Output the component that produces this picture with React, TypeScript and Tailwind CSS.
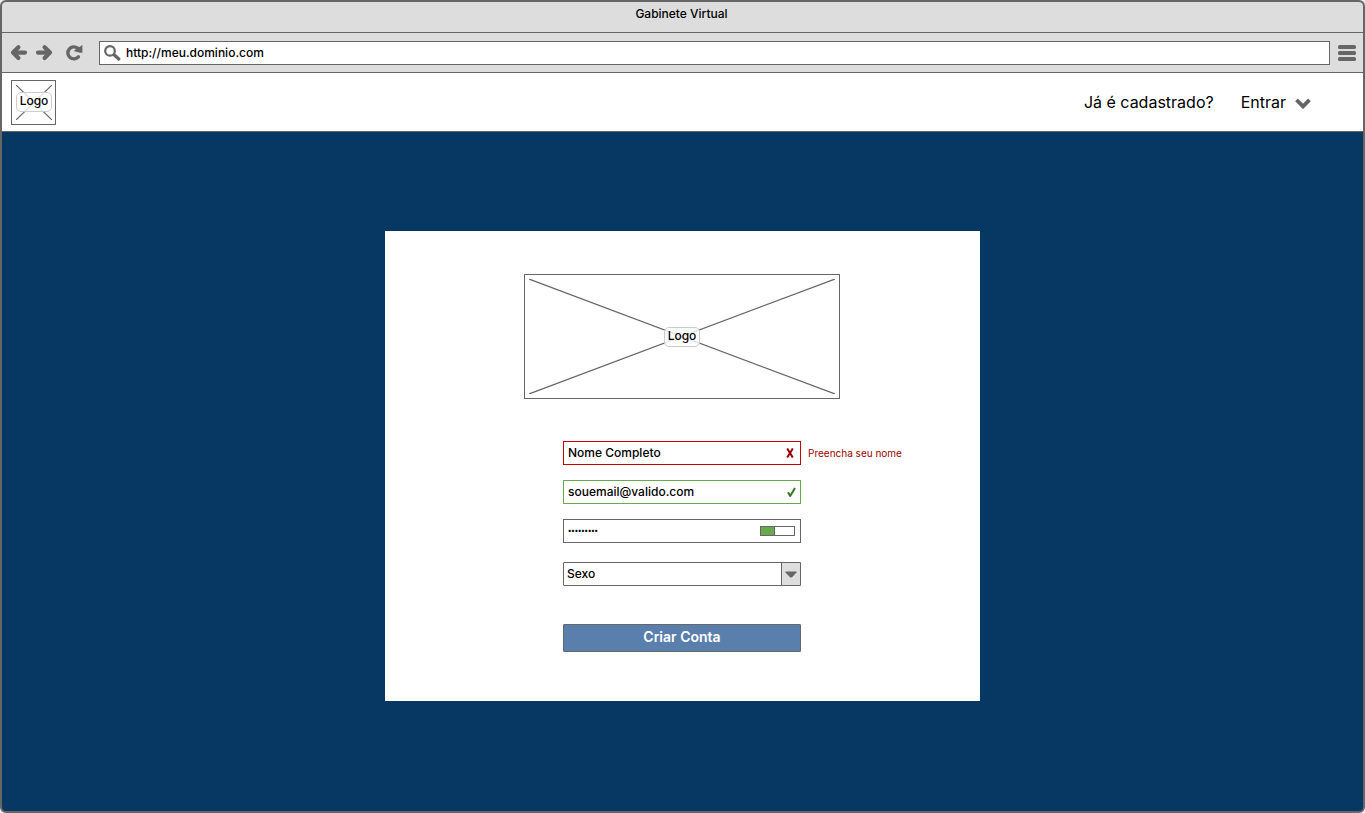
import { ReactNode } from "react";

function LogoPlaceholder({ className }: { className: string }) {
  return (
    <div className={`grid place-items-center border border-[#666] bg-white p-1 ${className}`}>
      <svg className="col-start-1 row-start-1 h-full w-full text-[#666]" stroke="currentColor" strokeWidth="1.2" aria-hidden="true">
        <line x1="0" y1="0" x2="100%" y2="100%" />
        <line x1="100%" y1="0" x2="0" y2="100%" />
      </svg>
      <span className="z-10 col-start-1 row-start-1 flex h-5 w-9 items-center justify-center rounded-[5px] border border-[#ccc] bg-white/80 pb-[2px] text-xs leading-4 font-medium">
        Logo
      </span>
    </div>
  );
}

function ToolButton({ label, children }: { label: string; children: ReactNode }) {
  return (
    <button type="button" aria-label={label} className="flex h-6 items-center text-[#666]">
      {children}
    </button>
  );
}

function BrowserBar() {
  return (
    <div className="bg-[#ddd]">
      <div className="flex h-[31px] items-start justify-center border-b border-[#666] pt-1 pr-[2px] text-xs leading-4 font-medium">
        Gabinete Virtual
      </div>
      <div className="flex h-10 items-center border-b border-[#666] pr-[7px] pl-2">
        <div className="flex items-center gap-[7px]">
          <ToolButton label="Voltar">
            <svg width="18" height="18" viewBox="0 0 18 18" fill="none" stroke="currentColor" strokeWidth="4.2" strokeLinecap="round" strokeLinejoin="round">
              <path d="M8.400 3.300 3 8.600 8.400 14M4 8.600H15" />
            </svg>
          </ToolButton>
          <ToolButton label="Avançar">
            <svg width="18" height="18" viewBox="0 0 18 18" fill="none" stroke="currentColor" strokeWidth="4.2" strokeLinecap="round" strokeLinejoin="round">
              <path d="M9.600 3.300 15 8.600 9.600 14M14 8.600H3" />
            </svg>
          </ToolButton>
        </div>
        <div className="ml-3 flex">
          <ToolButton label="Recarregar">
            <svg width="18" height="18" viewBox="0 0 18 18" fill="none">
              <path d="M12.600 4.200A6 6 0 1 0 13.400 12.800" stroke="currentColor" strokeWidth="3.400" strokeLinecap="round" />
              <path d="M17.400 1V8.800H15L9.300 7.200V6.200Z" fill="currentColor" />
            </svg>
          </ToolButton>
        </div>
        <label className="mr-2 ml-4 flex h-6 flex-1 items-center border border-[#666] bg-white pl-1">
          <svg width="17" height="16" viewBox="0 0 17 16" fill="none" stroke="#666" aria-hidden="true">
            <circle cx="6" cy="5.900" r="4.800" strokeWidth="2.200" />
            <path d="M10.400 10l4.400 4" strokeWidth="3.200" strokeLinecap="round" />
          </svg>
          <input aria-label="Endereço" defaultValue="http://meu.dominio.com" className="ml-[5px] min-w-0 flex-1 bg-transparent text-xs leading-4 font-medium outline-none" />
        </label>
        <ToolButton label="Menu">
          <svg width="18" height="16" viewBox="0 0 18 16" fill="currentColor">
            <rect y="0" width="18" height="4" rx="1.600" />
            <rect y="6" width="18" height="4" rx="1.600" />
            <rect y="12" width="18" height="4" rx="1.600" />
          </svg>
        </ToolButton>
      </div>
    </div>
  );
}

function SiteHeader() {
  return (
    <header className="flex h-[59px] items-center justify-between border-b border-[#666] bg-white pr-[52px] pl-[9px]">
      <LogoPlaceholder className="size-[45px]" />
      <nav className="flex items-center gap-[27px] text-base">
        <span>Já é cadastrado?</span>
        <button type="button" className="flex items-center gap-[9px]">
          Entrar
          <svg width="16" height="14" viewBox="0 0 16 14" fill="none" stroke="#666" strokeWidth="3.800" aria-hidden="true">
            <path d="M1.500 4.800 8 11.400l6.500-6.600" />
          </svg>
        </button>
      </nav>
    </header>
  );
}

function SignUpForm() {
  return (
    <form className="grid grid-cols-[1fr_238px_1fr] text-xs leading-4 font-medium" onSubmit={(e) => e.preventDefault()}>
      <label className="col-start-2 flex h-6 items-center border border-[#c00] pr-[6px] pb-px pl-1">
        <input aria-label="Nome" aria-describedby="nome-erro" aria-invalid="true" defaultValue="Nome Completo" className="min-w-0 flex-1 outline-none" />
        <svg width="8" height="10" viewBox="0 0 8 10" fill="none" stroke="#900" strokeWidth="2" aria-hidden="true">
          <path d="M1.200.500 6.800 9.500M6.800.500 1.200 9.500" />
        </svg>
      </label>
      <span id="nome-erro" className="col-start-3 pt-1 pl-[7px] text-[10px] leading-4 font-normal text-[#900]">
        Preencha seu nome
      </span>

      <label className="col-start-2 mt-[15px] flex h-6 items-center border border-[#6aa84f] pr-1 pb-px pl-1">
        <input aria-label="E-mail" type="email" defaultValue="souemail@valido.com" className="min-w-0 flex-1 outline-none" />
        <svg width="9" height="10" viewBox="0 0 9 10" fill="none" stroke="#38761d" strokeWidth="2" strokeLinejoin="round" aria-hidden="true">
          <path d="M1 5.200 3.200 9 8 1" />
        </svg>
      </label>

      <label className="col-start-2 mt-[15px] flex h-6 items-center border border-[#666] pr-[5px] pl-1">
        <input aria-label="Senha" type="password" defaultValue="senha1234" className="min-w-0 flex-1 text-[7px] font-bold outline-none" />
        <span className="flex h-[10px] w-[35px] border border-[#666]">
          <span className="w-[14px] border-r border-[#666] bg-[#6aa84f]" />
        </span>
      </label>

      <div className="relative col-start-2 mt-[19px] h-6">
        <select aria-label="Sexo" className="h-full w-full appearance-none rounded-[1px] border border-[#666] bg-white pb-px pl-[3px] outline-none">
          <option>Sexo</option>
          <option>Feminino</option>
          <option>Masculino</option>
        </select>
        <span className="pointer-events-none absolute inset-y-0 right-0 flex w-5 items-center justify-center rounded-r-[1px] border border-[#666] bg-[#ddd]">
          <svg width="12" height="7" viewBox="0 0 12 7" fill="#666" aria-hidden="true">
            <path d="M1 .500h10q1 .200.500 1L7 6.200q-1 .800-2 0L.500 1.500Q0 .700 1 .500Z" />
          </svg>
        </span>
      </div>

      <button type="submit" className="col-start-2 mt-[38px] h-7 rounded-[1px] border border-[#666] bg-[#5b7fac] pb-[2px] text-sm leading-4 font-semibold text-white">
        Criar Conta
      </button>
    </form>
  );
}

export default function App() {
  return (
    <div className="min-h-screen bg-[#e8eef4] font-['Inter',sans-serif] text-black">
      <div className="flex min-h-screen flex-col overflow-hidden rounded-[6px] border-2 border-[#666] bg-[#073763]">
        <BrowserBar />
        <SiteHeader />
        <main className="flex flex-1 flex-col items-center pt-[99px] pb-[110px]">
          <section className="w-full max-w-[595px] bg-white pt-[43px] pr-px pb-[49px]">
            <div className="mb-[42px] flex justify-center">
              <LogoPlaceholder className="h-[125px] w-[316px]" />
            </div>
            <SignUpForm />
          </section>
        </main>
      </div>
    </div>
  );
}
